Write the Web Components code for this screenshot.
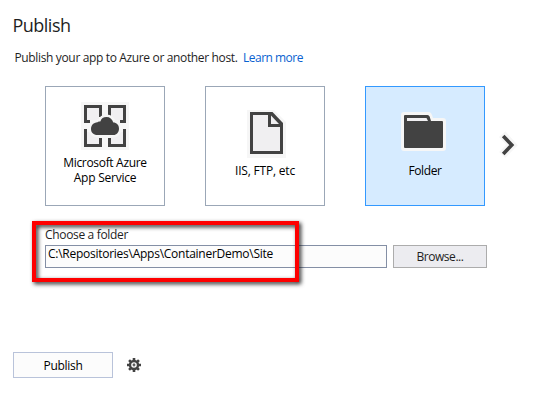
<!DOCTYPE html>
<html lang="en">
<head>
<meta charset="utf-8">
<title>Publish</title>
<style>
body { margin: 0; background: #fff; }
</style>
</head>
<body>
<publish-page></publish-page>
<script>
const define = (name, html, init) => customElements.define(name, class extends HTMLElement {
  constructor() {
    super();
    this.attachShadow({ mode: 'open' }).innerHTML = html;
  }
  connectedCallback() { if (init) init(this); }
});

// One line of text whose tracking is adjusted to a given width.
define('ui-text', `
<style>
:host { display: block; white-space: nowrap; line-height: 16px; }
span { display: inline-block; }
</style><span><slot></slot></span>`, el => {
  const span = el.shadowRoot.querySelector('span');
  const width = +el.getAttribute('fit');
  const n = el.textContent.length;
  const spacing = (width - span.getBoundingClientRect().width) / n;
  span.style.letterSpacing = spacing.toFixed(3) + 'px';
});

define('ui-icon', `
<style>
:host { display: block; }
svg { display: block; }
</style><div></div>`, el => {
  el.shadowRoot.querySelector('div').innerHTML = {
    azure: `<svg width="48" height="48" viewBox="0 0 48 48">
      <path fill="#f6f6f6" d="M0 0h48v48H0z"/>
      <path fill="#f0eff1" d="M6 6h12v12H6zM30 6h12v12H30zM6 30h12v12H6zM30 30h12v12H30z"/>
      <path fill="#424242" d="M3 3h18v12h-3V6H6v12h3v3H3zM27 3h18v18h-6v-3h3V6H30v9h-3zM3 27h3v15h12v-6h3v9H3zM27 36h3v6h12V27h3v18H27z"/>
      <path fill="#424242" stroke="#f6f6f6" stroke-width="5" paint-order="stroke" stroke-linejoin="round" d="M16.500 33C12.500 33 10 30.500 10 27S12.500 20.500 16.500 20.300C17.500 19.300 18.500 19.500 19.300 19.400C20.300 16.500 22.300 15 25.500 15S31.300 17 32.300 20.600C35.500 20.600 38 23 38 26.700S35.500 33 32.500 33z"/></svg>`,
    file: `<svg width="48" height="48" viewBox="0 0 48 48">
      <path fill="#f6f6f6" d="M6 0H33L45 12V48H6z"/>
      <path fill="#424242" d="M9 2H31.500L42 13V44H9z"/>
      <path fill="#f0eff1" d="M12 5H27V17H39V41H12zM30 5.500L38 14H30z"/></svg>`,
    folder: `<svg width="48" height="48" viewBox="0 0 48 48">
      <path fill="#f6f6f6" d="M3 2H28Q30 2 31 5L32 8H42Q45 8 45 11V38Q45 41 42 41H3Q0 41 0 38V5Q0 2 3 2z"/>
      <path fill="#424242" d="M4 5H26.500Q28 5 28.600 6.600L30 11H41Q42 11 42 12V37Q42 38 41 38H4Q3 38 3 37V6Q3 5 4 5z"/>
      <path fill="#f0eff1" d="M6 8H25.500L27 11H6z"/></svg>`,
    next: `<svg width="20" height="30" viewBox="0 0 20 30" fill="none">
      <path stroke="#f6f6f6" stroke-width="8.500" d="M3.200 4.100L13 15L3.200 24.900"/>
      <path stroke="#424242" stroke-width="3.600" d="M4.200 6L12.800 15L4.200 24"/></svg>`,
    gear: `<svg width="14" height="14" viewBox="-7 -7 14 14">
      <g fill="#424242"><path d="M-1.300-7h2.600V7h-2.600zM-7-1.300H7v2.600H-7z"/>
      <path transform="rotate(45)" d="M-1.300-7h2.600V7h-2.600zM-7-1.300H7v2.600H-7z"/></g>
      <circle r="4" fill="#fff" stroke="#424242" stroke-width="2.400"/><circle r="1.400" fill="#424242"/><circle r=".5" fill="#ddd"/></svg>`
  }[el.getAttribute('name')];
});

define('target-card', `
<style>
:host { box-sizing: border-box; width: 120px; height: 120px; border: 1px solid #9ba7b7; background: #fff;
  display: flex; flex-direction: column; align-items: center; justify-content: flex-start; padding-top: 23px; }
:host([two-line]) { padding-top: 15px; }
:host([selected]) { background: #d6ebff; border-color: #3399ff; }
.label { margin-top: 5px; display: flex; flex-direction: column; align-items: center; }
::slotted(ui-text) { line-height: 15px; }
</style>
<slot name="icon"></slot><div class="label"><slot></slot></div>`);

define('push-button', `
<style>
:host { box-sizing: border-box; display: flex; align-items: center; justify-content: center; padding-top: 1px;
  border: 1px solid var(--edge); background: var(--face); }
</style><slot></slot>`);

define('path-input', `
<style>
:host { box-sizing: border-box; display: block; width: 342px; height: 23px; border: 1px solid #848fa5;
  background: #fcfcfc; padding: 0 0 0 2px; color: #000; }
</style><slot></slot>`);

// Red annotation frame laid over the folder field.
define('highlight-frame', `
<style>
:host { position: absolute; left: 32px; top: 221px; box-sizing: border-box; width: 267px; height: 61px;
  border: 4px solid #fe0000; filter: drop-shadow(2px 2px 2px rgba(0,0,0,.85)); }
</style>`);

define('publish-page', `
<style>
:host { display: flex; flex-direction: column; position: relative; box-sizing: border-box; width: 542px; height: 408px;
  background: #fff; color: #1e1e1e; font: 12px "Open Sans", "Noto Sans", sans-serif; overflow: hidden; }
.title { margin: 13px 0 0 12.500px; font-size: 18px; line-height: 24px; }
.intro { display: flex; gap: 5.500px; margin: 13px 0 0 14.500px; }
.link { color: #0862d0; }
.cards { display: flex; align-items: center; gap: 40px; margin: 20px 0 0 45px; color: #000; }
.next { margin-left: -40px; padding-left: 14px; margin-top: -2px; }
.choose { margin: 21px 0 0 45px; }
.row { display: flex; gap: 6px; margin: 2px 0 0 45px; }
.browse { width: 94px; height: 23px; --edge: #acacac; --face: #ececf0; }
.actions { display: flex; align-items: center; gap: 14px; margin: 84px 0 0 13px; color: #000; }
.publish { width: 100px; height: 26px; --edge: #b9c3da; --face: #fcfcfc; }
</style>
<ui-text class="title" fit="58">Publish</ui-text>
<div class="intro"><ui-text fit="223">Publish your app to Azure or another host.</ui-text><ui-text class="link" fit="60">Learn more</ui-text></div>
<div class="cards">
  <target-card two-line><ui-icon slot="icon" name="azure"></ui-icon><ui-text fit="83.500">Microsoft Azure</ui-text><ui-text fit="62.500">App Service</ui-text></target-card>
  <target-card><ui-icon slot="icon" name="file"></ui-icon><ui-text fit="60">IIS, FTP, etc</ui-text></target-card>
  <target-card selected><ui-icon slot="icon" name="folder"></ui-icon><ui-text fit="33">Folder</ui-text></target-card>
  <ui-icon class="next" name="next"></ui-icon>
</div>
<ui-text class="choose" fit="83">Choose a folder</ui-text>
<div class="row"><path-input><ui-text fit="225">C:\\Repositories\\Apps\\ContainerDemo\\Site</ui-text></path-input>
  <push-button class="browse"><ui-text fit="47">Browse...</ui-text></push-button></div>
<div class="actions"><push-button class="publish"><ui-text fit="39">Publish</ui-text></push-button><ui-icon name="gear"></ui-icon></div>
<highlight-frame></highlight-frame>`);
</script>
</body>
</html>
